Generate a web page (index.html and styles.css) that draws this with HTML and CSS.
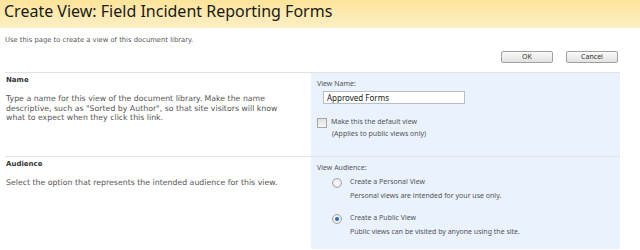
FILE: index.html
```html
<!DOCTYPE html>
<html lang="en">
<head>
  <meta charset="UTF-8" />
  <title>Create View: Field Incident Reporting Forms</title>
  <link rel="stylesheet" href="styles.css">
</head>
<body>

<div class="title-bar">
  <h1>Create View: Field Incident Reporting Forms</h1>
</div>

<p class="intro">Use this page to create a view of this document library.</p>

<div class="actions">
  <button class="btn">OK</button>
  <button class="btn">Cancel</button>
</div>

<div class="form">
  <div class="section">
    <div class="section-info">
      <h3>Name</h3>
      <p>Type a name for this view of the document library. Make the name descriptive, such as "Sorted by Author", so that site visitors will know what to expect when they click this link.</p>
    </div>
    <div class="section-field">
      <label class="field-label" for="view-name">View Name:</label>
      <input type="text" id="view-name" class="text-input" value="Approved Forms">
      <div class="check-row">
        <span class="checkbox"></span>
        <div>
          <div>Make this the default view</div>
          <div class="note">(Applies to public views only)</div>
        </div>
      </div>
    </div>
  </div>

  <div class="section">
    <div class="section-info">
      <h3>Audience</h3>
      <p>Select the option that represents the intended audience for this view.</p>
    </div>
    <div class="section-field">
      <div class="field-label">View Audience:</div>
      <div class="radio-row">
        <span class="radio"></span>
        <div>
          <div>Create a Personal View</div>
          <div class="hint">Personal views are intended for your use only.</div>
        </div>
      </div>
      <div class="radio-row">
        <span class="radio checked"></span>
        <div>
          <div>Create a Public View</div>
          <div class="hint">Public views can be visited by anyone using the site.</div>
        </div>
      </div>
    </div>
  </div>
</div>

</body>
</html>
```

FILE: styles.css
```css
body {
  margin: 0;
  font-family: 'DejaVu Sans', Verdana, sans-serif;
  color: #4c4c4c;
  background: #fff;
  overflow: hidden;
}

.title-bar {
  height: 28px;
  background: linear-gradient(#fde49a, #fef0c6);
  padding-left: 4px;
}

h1 {
  margin: 0;
  font-family: 'Noto Sans', sans-serif;
  font-weight: normal;
  font-size: 16px;
  line-height: 22px;
  color: #1a1a1a;
}

.intro {
  margin: 7px 0 0 5px;
  font-size: 6.8px;
  line-height: 10px;
  color: #555;
}

.actions {
  display: flex;
  justify-content: flex-end;
  gap: 13px;
  padding-right: 22px;
  margin-top: 6px;
}

.btn {
  width: 52px;
  height: 12px;
  padding: 0;
  border: 1px solid #a0a0a0;
  border-radius: 2px;
  background: linear-gradient(#fafafa, #e2e2e2);
  font-family: 'Noto Sans', sans-serif;
  font-size: 7px;
  line-height: 10px;
  color: #333;
}

.form {
  margin: 9px 20px 0 5px;
}

.section {
  display: flex;
  border-top: 1px solid #e2e2e2;
}

.section-info {
  width: 306px;
  flex: none;
}

.section-info h3 {
  margin: 2px 0 0 1px;
  font-size: 7px;
  line-height: 10px;
  color: #333;
}

.section-info p {
  margin: 9px 18px 0 1px;
  font-size: 7.8px;
  line-height: 9.5px;
  color: #555;
}

.section-field {
  flex: 1;
  background: #eaf2fd;
  padding: 6px 0 0 6px;
  font-family: 'Noto Sans', sans-serif;
  font-size: 7px;
  line-height: 10px;
  color: #555;
}

.section:first-child .section-field {
  height: 77px;
}

.section + .section .section-field {
  height: 86px;
}

.field-label {
  display: block;
}

.text-input {
  display: block;
  box-sizing: border-box;
  width: 142px;
  height: 13px;
  margin: 2px 0 0 6px;
  padding: 0 3px;
  border: 1px solid #b7bec8;
  font-family: 'Noto Sans', sans-serif;
  font-size: 8px;
  color: #222;
}

.check-row {
  display: flex;
  gap: 4px;
  margin-top: 12px;
  line-height: 12px;
}

.checkbox {
  width: 8px;
  height: 8px;
  margin-top: 2px;
  border: 1px solid #a7a7a7;
  background: linear-gradient(#e0e0e0, #f6f6f6);
}

.note {
  margin-left: 1px;
}

.radio-row {
  display: flex;
  gap: 8px;
  margin: 3px 0 0 15px;
  line-height: 12px;
}

.radio-row + .radio-row {
  margin-top: 10px;
}

.hint {
  margin-top: 2px;
}

.radio {
  position: relative;
  width: 8px;
  height: 8px;
  margin-top: 2px;
  border: 1px solid #a5a5a5;
  border-radius: 50%;
  background: radial-gradient(#ffffff, #dcdcdc);
}

.radio.checked::after {
  content: "";
  position: absolute;
  left: 2px;
  top: 2px;
  width: 4px;
  height: 4px;
  border-radius: 50%;
  background: #2a6cae;
}
```
